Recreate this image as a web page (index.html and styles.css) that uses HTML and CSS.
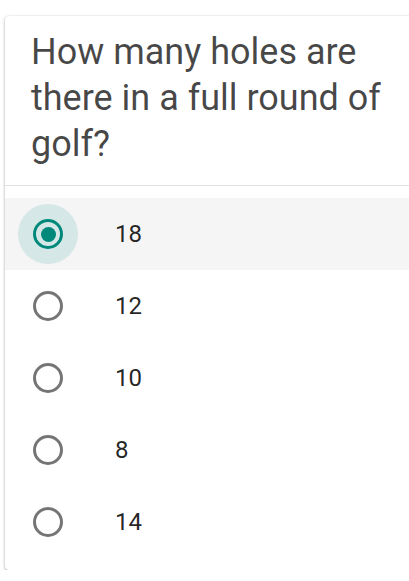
FILE: index.html
```html
<!DOCTYPE html>
<html>
<head>
<meta charset="utf-8">
<link rel="stylesheet" href="styles.css">
</head>
<body>
<div class="card">
  <div class="question">How many holes are there in a full round of golf?</div>
  <div class="options">
    <div class="option selected">
      <span class="radio-wrap"><span class="radio checked"></span></span>
      <span class="label">18</span>
    </div>
    <div class="option">
      <span class="radio-wrap"><span class="radio"></span></span>
      <span class="label">12</span>
    </div>
    <div class="option">
      <span class="radio-wrap"><span class="radio"></span></span>
      <span class="label">10</span>
    </div>
    <div class="option">
      <span class="radio-wrap"><span class="radio"></span></span>
      <span class="label">8</span>
    </div>
    <div class="option">
      <span class="radio-wrap"><span class="radio"></span></span>
      <span class="label">14</span>
    </div>
  </div>
</div>
</body>
</html>
```
FILE: styles.css
```css
html, body {
  margin: 0;
  padding: 0;
  background: #ffffff;
  overflow: hidden;
}
body {
  font-family: Roboto, "Liberation Sans", sans-serif;
  padding: 16px 0 0 5px;
}
.card {
  width: 430px;
  background: #fff;
  border-radius: 4px;
  box-shadow: 0 1px 3px rgba(0,0,0,0.35), 0 0 1px rgba(0,0,0,0.12);
}
.question {
  padding: 13px 40px 18px 26px;
  font-size: 36px;
  line-height: 46px;
  color: rgba(0,0,0,0.72);
  border-bottom: 1px solid #e0e0e0;
}
.options {
  padding: 12px 0 12px 0;
  display: flex;
  flex-direction: column;
}
.option {
  height: 72px;
  display: flex;
  align-items: center;
}
.option.selected {
  background: #f5f5f5;
}
.radio-wrap {
  width: 60px;
  height: 60px;
  margin-left: 13px;
  border-radius: 50%;
  display: flex;
  align-items: center;
  justify-content: center;
}
.selected .radio-wrap {
  background: #d5e7e6;
}
.radio {
  box-sizing: border-box;
  width: 30px;
  height: 30px;
  border-radius: 50%;
  border: 3px solid #757575;
  display: flex;
  align-items: center;
  justify-content: center;
}
.radio.checked {
  border-color: #00897b;
}
.radio.checked::after {
  content: "";
  width: 15px;
  height: 15px;
  border-radius: 50%;
  background: #00897b;
}
.label {
  margin-left: 37px;
  font-size: 24px;
  color: rgba(0,0,0,0.87);
}
```
